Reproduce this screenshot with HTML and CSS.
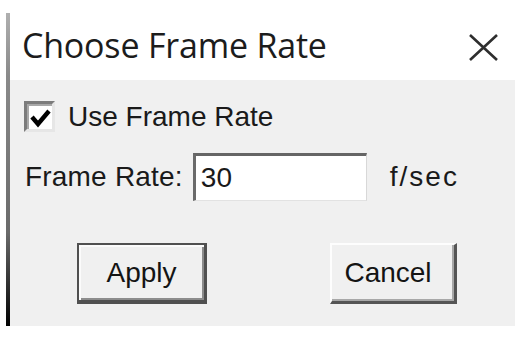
FILE: index.html
```html
<!DOCTYPE html>
<html>
<head>
<meta charset="utf-8">
<link rel="stylesheet" href="styles.css">
</head>
<body>
<div class="window">
  <div class="titlebar">
    <span class="title">Choose Frame Rate</span>
    <svg class="close" width="31" height="29" viewBox="0 0 31 29">
      <path d="M2 2 L29 27 M29 2 L2 27" stroke="#2e2e2e" stroke-width="2.6" fill="none"/>
    </svg>
  </div>
  <div class="content">
    <div class="row check-row">
      <span class="checkbox">
        <svg width="21" height="20" viewBox="0 0 21 20">
          <path d="M2 9 L8 16 L19 3" stroke="#000" stroke-width="4.4" fill="none" stroke-linejoin="miter"/>
        </svg>
      </span>
      <span class="label">Use Frame Rate</span>
    </div>
    <div class="row rate-row">
      <span class="label">Frame Rate:</span>
      <span class="input">30</span>
      <span class="label unit">f/sec</span>
    </div>
    <div class="row buttons">
      <span class="btn btn-default">Apply</span>
      <span class="btn btn-cancel">Cancel</span>
    </div>
  </div>
</div>
</body>
</html>
```
FILE: styles.css
```css
html, body {
  margin: 0;
  padding: 0;
  background: #ffffff;
}
body {
  width: 523px;
  height: 339px;
  overflow: hidden;
}
.window {
  margin: 13px 0 0 6px;
  width: 505px;
  height: 313px;
  border-left: 4px solid #7a7a7a;
  border-image: linear-gradient(#b0b0b0, #8a8a8a 20%, #6a6a6a 70%, #000000) 1;
  display: flex;
  flex-direction: column;
}
.titlebar {
  height: 67px;
  background: #ffffff;
  display: flex;
  align-items: center;
  justify-content: space-between;
  padding: 0 16px 0 12px;
}
.title {
  font-family: "Open Sans", "Noto Sans", sans-serif;
  font-size: 34px;
  color: #1c1c1c;
  letter-spacing: -0.2px;
  margin-top: -4px;
}
.close {
  display: block;
  margin-top: 1px;
}
.content {
  flex: 1;
  background: #f0f0f0;
  display: flex;
  flex-direction: column;
  padding: 21px 0 0 0;
}
.row {
  display: flex;
  align-items: center;
}
.label {
  font-family: "Liberation Sans", Arial, sans-serif;
  font-size: 28px;
  color: #1a1a1a;
}
.check-row {
  padding-left: 14px;
  height: 31px;
}
.checkbox {
  width: 25px;
  height: 25px;
  background: #ffffff;
  border-top: 3px solid #7c7c7c;
  border-left: 3px solid #7c7c7c;
  border-right: 3px solid #e6e6e6;
  border-bottom: 3px solid #e6e6e6;
  box-shadow: inset 2px 2px 0 #a8a8a8;
  display: flex;
  align-items: center;
  justify-content: center;
  margin-right: 13px;
}
.checkbox svg {
  display: block;
  margin: 2px 0 0 1px;
}
.rate-row {
  margin-top: 21px;
  padding-left: 15px;
  height: 48px;
}
.rate-row .label:first-child {
  letter-spacing: 0.2px;
}
.input {
  margin-left: 10px;
  height: 44px;
  background: #ffffff;
  border-top: 3px solid #656565;
  border-left: 3px solid #6a6a6a;
  border-right: 1px solid #d8d8d8;
  border-bottom: 1px solid #e2e2e2;
  font-family: "Liberation Sans", Arial, sans-serif;
  font-size: 28px;
  color: #1a1a1a;
  display: flex;
  align-items: center;
  padding-left: 5px;
  box-sizing: content-box;
  width: 165px;
}
.unit {
  margin-left: 23px;
  letter-spacing: 2px;
}
.buttons {
  margin-top: 42px;
  padding-left: 67px;
  gap: 123px;
}
.btn {
  height: 61px;
  box-sizing: border-box;
  display: flex;
  align-items: center;
  justify-content: center;
  font-family: "Liberation Sans", Arial, sans-serif;
  font-size: 28px;
  color: #141414;
  background: #f0f0f0;
}
.btn-default {
  width: 130px;
  border: 2px solid #505050;
  border-right-width: 3px;
  border-bottom-width: 4px;
  box-shadow: inset 2px 2px 0 #fbfbfb, inset -2px -2px 0 #8c8c8c;
}
.btn-cancel {
  width: 127px;
  border-top: 2px solid #fdfdfd;
  border-left: 2px solid #fdfdfd;
  border-right: 3px solid #555555;
  border-bottom: 3px solid #555555;
  box-shadow: inset -2px -2px 0 #a8a8a8;
  padding-right: 10px;
}
```
